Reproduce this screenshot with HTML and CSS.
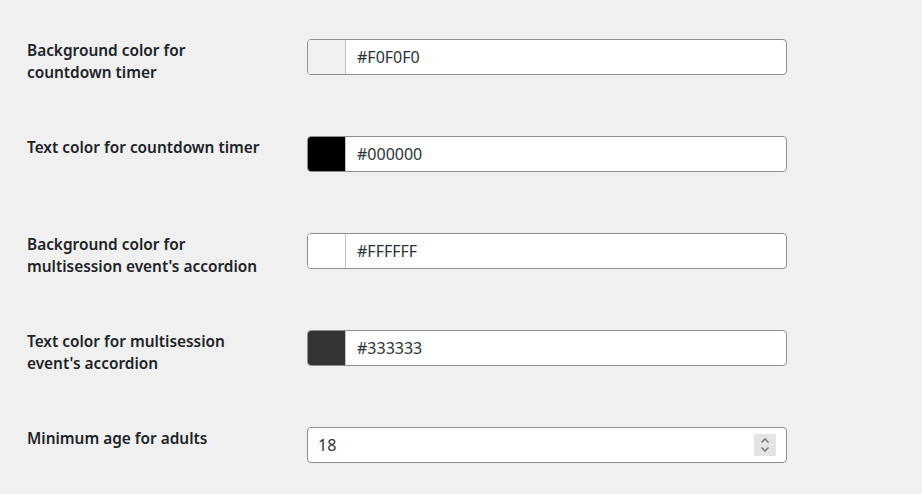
FILE: index.html
```html
<!DOCTYPE html>
<html>
<head>
<meta charset="utf-8">
<link rel="stylesheet" href="styles.css">
</head>
<body>
<div class="settings">
  <div class="row">
    <div class="label">Background color for countdown timer</div>
    <div class="field"><span class="swatch" style="background:#F0F0F0"></span><span class="value">#F0F0F0</span></div>
  </div>
  <div class="row">
    <div class="label">Text color for countdown timer</div>
    <div class="field"><span class="swatch" style="background:#000000"></span><span class="value">#000000</span></div>
  </div>
  <div class="row">
    <div class="label">Background color for multisession event's accordion</div>
    <div class="field"><span class="swatch" style="background:#FFFFFF"></span><span class="value">#FFFFFF</span></div>
  </div>
  <div class="row">
    <div class="label">Text color for multisession event's accordion</div>
    <div class="field"><span class="swatch" style="background:#333333"></span><span class="value">#333333</span></div>
  </div>
  <div class="row">
    <div class="label">Minimum age for adults</div>
    <div class="field number"><span class="value num">18</span>
      <span class="spin"><svg width="12" height="18" viewBox="0 0 12 18"><path d="M2.5 6.5 L6 3 L9.5 6.5" fill="none" stroke="#6b6e73" stroke-width="1.3"/><path d="M2.5 11.5 L6 15 L9.5 11.5" fill="none" stroke="#6b6e73" stroke-width="1.3"/></svg></span>
    </div>
  </div>
</div>
</body>
</html>
```
FILE: styles.css
```css
html, body {
  margin: 0;
  padding: 0;
  background: #f0f0f0;
}
body {
  font-family: "Noto Sans", "Open Sans", sans-serif;
  color: #1d2327;
}
.settings {
  padding-left: 27px;
}
.row {
  display: flex;
  align-items: flex-start;
  padding: 39px 0 22px;
  height: 36px;
}
.label {
  width: 238px;
  margin-right: 42px;
  padding-top: 1px;
  font-size: 15.4px;
  font-weight: 600;
  line-height: 22px;
}
.field {
  width: 480px;
  height: 36px;
  box-sizing: border-box;
  border: 1px solid #8c8f94;
  border-radius: 4px;
  background: #fff;
  display: flex;
  align-items: center;
  overflow: hidden;
}
.swatch {
  width: 37px;
  height: 100%;
  border-right: 1px solid #c3c4c7;
  flex: none;
}
.value {
  font-size: 16px;
  color: #2c3338;
  padding-left: 11px;
  flex: 1;
}
.num {
  padding-left: 10px;
}
.spin {
  width: 22px;
  height: 22px;
  background: #e4e4e7;
  display: flex;
  align-items: center;
  justify-content: center;
  margin-right: 10px;
}
```
